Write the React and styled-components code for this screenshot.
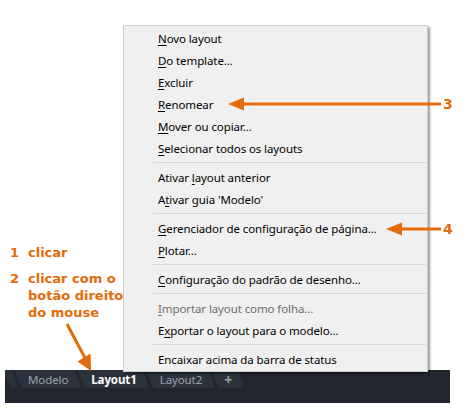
import React from "react";
import styled, { createGlobalStyle } from "styled-components";

const ORANGE = "#e36c0a";

const Global = createGlobalStyle`
  html, body { margin: 0; padding: 0; background: #ffffff; }
  body { width: 467px; height: 409px; overflow: hidden; }
`;

const Stage = styled.div`
  position: relative;
  width: 467px;
  height: 409px;
  box-sizing: border-box;
  padding: 0 17px 6px 5px;
  display: flex;
  flex-direction: column;
  justify-content: flex-end;
  background: #fff;
`;

const Labels = styled.div`
  display: grid;
  grid-template-columns: 18px auto;
  align-items: start;
  row-gap: 9px;
  margin: 0 0 49px 5px;
  font-family: "DejaVu Sans", Verdana, sans-serif;
  font-weight: bold;
  font-size: 13px;
  line-height: 17px;
  color: ${ORANGE};
`;

const Num = styled.span``;
const LabelText = styled.span``;

const TabBar = styled.div`
  height: 33px;
  background: #21262e;
  display: flex;
  flex-direction: column;
`;

const TabRow = styled.div`
  height: 18px;
  display: flex;
  align-items: stretch;
  gap: 3px;
  padding-left: 2px;
  overflow: hidden;
`;

const Tab = styled.div`
  position: relative;
  display: flex;
  align-items: center;
  justify-content: center;
  padding: 0 ${(p) => p.$pad ?? 12}px;
  font-family: "Noto Sans", "Open Sans", sans-serif;
  font-size: ${(p) => (p.$plus ? 14 : 11.5)}px;
  letter-spacing: -0.1px;
  font-weight: ${(p) => (p.$active || p.$plus ? 700 : 400)};
  color: ${(p) => (p.$active ? "#ffffff" : "#9aa1ac")};
  z-index: 0;
  &::before {
    content: "";
    position: absolute;
    inset: 0;
    background: #2c323c;
    transform: skewX(20deg);
    border-radius: 0 0 4px 4px;
    z-index: -1;
  }
`;

const Menu = styled.div`
  position: absolute;
  left: 123px;
  top: 25px;
  width: 305px;
  box-sizing: border-box;
  background: #f0f0f0;
  border: 1px solid #cfcfcf;
  box-shadow: 2px 2px 2px rgba(0, 0, 0, 0.38);
  padding: 1px 0;
  font-family: "Noto Sans", "Open Sans", sans-serif;
  font-size: 11.5px;
  letter-spacing: -0.1px;
  z-index: 2;
`;

const Item = styled.div`
  height: 22px;
  display: flex;
  align-items: center;
  padding-left: 34px;
  color: ${(p) => (p.$disabled ? "#6d6d6d" : "#000")};
  white-space: nowrap;
  & u { text-underline-offset: 2px; }
`;

const Sep = styled.div`
  height: 7px;
  display: flex;
  align-items: center;
  margin: 0 1px 0 29px;
  &::after {
    content: "";
    flex: 1;
    height: 1px;
    background: #d7d7d7;
  }
`;

const Overlay = styled.svg`
  position: absolute;
  left: 0;
  top: 0;
  width: 467px;
  height: 409px;
  pointer-events: none;
  z-index: 3;
`;

const Callout = styled.span`
  position: absolute;
  left: 443px;
  top: ${(p) => p.$y - 10}px;
  height: 20px;
  line-height: 20px;
  font-family: "DejaVu Sans", Verdana, sans-serif;
  font-weight: bold;
  font-size: 14px;
  color: ${ORANGE};
  z-index: 3;
`;

const items = [
  [<><u>N</u>ovo layout</>],
  [<><u>D</u>o template...</>],
  [<><u>E</u>xcluir</>],
  [<><u>R</u>enomear</>],
  [<><u>M</u>over ou copiar...</>],
  [<><u>S</u>elecionar todos os layouts</>],
  "sep",
  [<>Ativar <u>l</u>ayout anterior</>],
  [<>A<u>t</u>ivar guia 'Modelo'</>],
  "sep",
  [<><u>G</u>erenciador de configuração de página...</>],
  [<><u>P</u>lotar...</>],
  "sep",
  [<><u>C</u>onfiguração do padrão de desenho...</>],
  "sep",
  [<><u>I</u>mportar layout como folha...</>, true],
  [<>E<u>x</u>portar o layout para o modelo...</>],
  "sep",
  [<>Encaixar acima da barra de status</>],
];

export default function App() {
  return (
    <>
      <Global />
      <Stage>
        <Labels>
          <Num>1</Num>
          <LabelText>clicar</LabelText>
          <Num>2</Num>
          <LabelText>
            clicar com o<br />
            botão direito<br />
            do mouse
          </LabelText>
        </Labels>
        <TabBar>
          <TabRow>
            <Tab $pad={4} />
            <Tab $pad={10}>Modelo</Tab>
            <Tab $pad={10} $active>Layout1</Tab>
            <Tab $pad={10}>Layout2</Tab>
            <Tab $pad={9} $plus>+</Tab>
          </TabRow>
        </TabBar>

        <Menu>
          {items.map((it, i) =>
            it === "sep" ? (
              <Sep key={i} />
            ) : (
              <Item key={i} $disabled={it[1]}>
                <span>{it[0]}</span>
              </Item>
            )
          )}
        </Menu>

        <Overlay viewBox="0 0 467 409">
          <g fill={ORANGE} stroke="none">
            <rect x="240" y="102.5" width="201" height="3" />
            <polygon points="228,104 244,97.5 244,110.5" />
            <rect x="398" y="227.5" width="43" height="3" />
            <polygon points="386,229 402,222.5 402,235.5" />
            <line x1="67" y1="324" x2="85" y2="358" stroke={ORANGE} strokeWidth="3" />
            <polygon points="91,371 77.5,361.5 90.5,353.5" />
          </g>
        </Overlay>
        <Callout $y={104}>3</Callout>
        <Callout $y={229}>4</Callout>
      </Stage>
    </>
  );
}
